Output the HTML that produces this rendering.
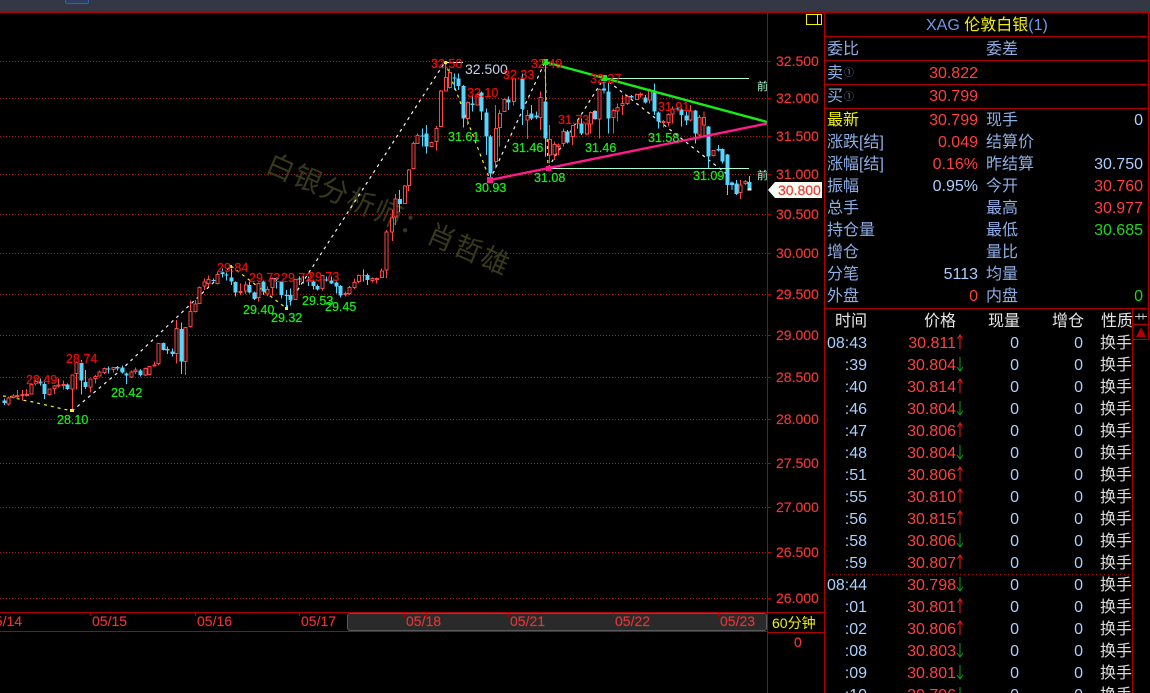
<!DOCTYPE html>
<html><head><meta charset="utf-8">
<style>
html,body{margin:0;padding:0;background:#000;width:1150px;height:693px;overflow:hidden}
svg{display:block}
text{font-family:"Liberation Sans","WenQuanYi Zen Hei","Noto Sans CJK SC",sans-serif;font-size:16px}
.ax{font-size:14px;fill:#f03636;stroke:#f03636;stroke-width:.15px}
.d{font-size:14px;fill:#e63434;stroke:#e63434;stroke-width:.15px}
.r{font-size:12.5px;fill:#ee0a0a;stroke:#ee0a0a;stroke-width:.25px}
.g{font-size:12.5px;fill:#14ee14;stroke:#14ee14;stroke-width:.25px}
.l{fill:#8eaee6}
.v{fill:#ff4040;text-anchor:end}
.b{fill:#a9d0ff;text-anchor:end}
.gv{fill:#22d422;text-anchor:end}
.h{fill:#e6e6e6}
.w{fill:#dcdcdc}
.c path{shape-rendering:crispEdges}
</style></head><body>
<svg width="1150" height="693" viewBox="0 0 1150 693" xmlns="http://www.w3.org/2000/svg">
<defs>
<g id="u"><path d="M960 -7V7M957.500 -3L960 -7L962.500 -3" fill="none" stroke="#e82020"/></g>
<g id="n"><path d="M960 -7V7M957 3L960 7L963 3" fill="none" stroke="#129c12"/></g>
</defs>
<rect width="1150" height="693" fill="#000"/>
<rect width="1150" height="11" fill="#343844"/>
<path d="M65.500 0V2.500Q65.500 3.500 67 3.500H87Q88.500 3.500 88.500 2.500V0" fill="#2d3f60" stroke="#2f62a8"/>
<rect y="11" width="1150" height="2" fill="#b00000"/>

<!-- grid -->
<g stroke="#a81818" stroke-dasharray="1 2" shape-rendering="crispEdges">
<path d="M0 61.500H767M0 98.500H767M0 136.500H767M0 174.500H767M0 214.500H767M0 253.500H767M0 294.500H767M0 335.500H767M0 377.500H767M0 419.500H767M0 463.500H767M0 507.500H767M0 552.500H767M0 598.500H767"/>
</g>
<g stroke="#b00000" shape-rendering="crispEdges">
<path d="M767 61.500h4M767 98.500h4M767 136.500h4M767 174.500h4M767 214.500h4M767 253.500h4M767 294.500h4M767 335.500h4M767 377.500h4M767 419.500h4M767 463.500h4M767 507.500h4M767 552.500h4M767 598.500h4"/>
</g>

<!-- watermark -->
<text transform="translate(264,171) rotate(23.500)" style="font-size:28px;letter-spacing:1.200px" fill="#38381a">白银分析师：肖哲雄</text>

<!-- dashed zigzag -->
<g fill="none" stroke-width="1.200" stroke-dasharray="3 4">
<path d="M3 396L13 397L22 400L33 402L50 406L72 411M231 266L286 308M445 62L490 180M545 62L548 168" stroke="#f2f21e"/>
<path d="M72 411L122 369L231 266M286 308L445 62M490 180L545 62M548 168L604 78L728 175" stroke="#f4f4f4"/>
</g>
<path d="M445 62.500H463" stroke="#f4f4f4"/>

<!-- candles, left half -->
<g class="c" transform="translate(0,240) scale(.33333)">
<path fill="none" stroke="#55d6ff" stroke-width="3" d="M13 476V495M121 415V436M133 420V477M202 430V450M244 360V464M256 390V447M325 380V400M352 378V392M367 376V400M379 398V432M421 387V410M490 307V332M502 320V342M517 325V350M544 247V402M640 115V125M667 85V112M679 98V122M694 85V135M706 125V170M748 125V160M763 155V180M790 122V165M829 112V145M844 125V175M859 150V205M871 145V197M898 110V135M911 108V130M925 110V138M940 118V148M952 133V152M980 110V125M994 110V132M1009 125V160M1021 135V172M1090 88V125M1103 100V135"/>
<path fill="none" stroke="#55d6ff" stroke-width="12" d="M13 481V489M121 425V431M133 432V462M202 433V447M244 369V422M256 426V441M325 386V389M352 381V386M367 383V398M379 400V406M421 391V405M490 309V330M502 327V331M517 334V342M544 267V365M640 120V123M667 97V102M679 104V107M694 112V125M706 126V157M748 135V158M763 158V177M790 125V155M829 114V118M844 125V165M859 165V168M871 165V180M898 115V118M925 122V125M940 125V138M952 138V148M980 118V122M994 122V130M1009 128V140M1021 138V167M1090 106V108M1103 105V120"/>
<path fill="none" stroke="#ff4444" stroke-width="3" d="M25 470V497M40 462V475M52 450V478M67 450V482M80 447V470M94 430V464M107 420V436M148 445V466M163 435V462M175 415V442M190 422V448M217 403V513M229 365V448M271 415V457M286 405V430M298 392V410M313 382V402M340 381V397M394 392V414M406 382V402M436 383V408M448 378V405M463 365V380M475 310V375M529 240V370M556 262V405M571 182V262M586 180V218M598 140V192M613 115V150M625 107V140M652 95V133M721 130V165M737 125V162M775 128V185M802 140V168M817 113V167M886 118V180M967 105V152M1036 155V170M1048 138V165M1063 115V147M1076 103V130M1117 112V128M1130 112V130M1145 85V113"/>
<path fill="#000" stroke="#ff4444" stroke-width="3" d="M21 474h9V492h-9zM36 468h9V472h-9zM48 466h9V470h-9zM63 464h9V467h-9zM76 463h9V466h-9zM90 433h9V462h-9zM103 425h9V431h-9zM144 447h9V463h-9zM159 438h9V446h-9zM171 435h9V438h-9zM186 433h9V437h-9zM213 405h9V447h-9zM225 367h9V401h-9zM267 417h9V441h-9zM282 410h9V416h-9zM294 396h9V408h-9zM309 386h9V397h-9zM336 383h9V388h-9zM390 396h9V411h-9zM402 390h9V395h-9zM432 385h9V405h-9zM444 380h9V403h-9zM459 375h9V378h-9zM471 310h9V371h-9zM525 265h9V340h-9zM552 262h9V365h-9zM567 215h9V260h-9zM582 192h9V215h-9zM594 142h9V190h-9zM609 126h9V138h-9zM621 118h9V130h-9zM648 103h9V130h-9zM717 155h9V158h-9zM733 135h9V153h-9zM771 130h9V172h-9zM798 148h9V162h-9zM813 115h9V143h-9zM882 118h9V178h-9zM963 107h9V145h-9zM1032 160h9V163h-9zM1044 142h9V160h-9zM1059 127h9V143h-9zM1072 106h9V125h-9zM1113 115h9V122h-9zM1126 116h9V118h-9zM1141 93h9V112h-9z"/>
</g>
<!-- candles, bridge -->
<g class="c">
<path fill="none" stroke="#ff4444" d="M386.500 230V278M392.500 210V241M395.500 194V225M408.500 169V191"/>
<path fill="#000" stroke="#ff4444" d="M385 232h3V270h-3zM390.500 218h3V232h-3zM394 199h3V217h-3z"/>
<path fill="none" stroke="#55d6ff" d="M399.500 190V212"/><path fill="#55d6ff" d="M398 199h4v5h-4z"/>
</g>
<!-- candles, right half -->
<g class="c" transform="translate(400,40) scale(.33333)">
<path fill="none" stroke="#55d6ff" stroke-width="3" d="M67 265V320M79 255V340M163 100V150M176 100V150M191 135V262M218 165V215M245 155V240M260 205V345M271 285V420M326 170V210M367 100V255M395 195V240M410 215V237M436 65V350M503 270V310M532 240V265M545 235V285M585 210V240M612 125V160M625 125V280M695 165V175M737 165V190M763 130V225M775 215V265M832 200V210M844 205V260M859 215V255M886 210V310M925 258V385M955 315V335M967 325V370M983 342V465M996 425V450M1009 420V465M1048 408V450"/>
<path fill="none" stroke="#55d6ff" stroke-width="12" d="M67 287V290M79 280V320M163 113V116M176 115V138M191 138V235M218 190V195M245 157V215M260 217V290M271 290V400M326 178V187M367 115V207M395 220V235M410 227V233M436 185V295M503 275V308M532 250V252M545 250V280M585 213V237M612 145V152M625 155V235M695 168V172M737 172V187M763 157V215M775 217V245M832 205V208M844 208V225M859 227V242M886 212V280M925 260V350M955 327V332M967 327V365M983 343V435M996 428V435M1009 430V462M1048 426V445"/>
<path stroke="#f4f4f4" stroke-width="12" d="M1048 445V452"/>
<path fill="none" stroke="#ff4444" stroke-width="3" d="M14 435V492M26 388V450M40 305V385M52 280V312M94 305V320M109 258V332M122 150V260M137 65V155M149 85V145M203 185V255M232 160V197M287 195V385M299 210V320M313 175V215M341 115V197M382 210V297M421 155V270M449 255V370M463 305V360M475 310V345M490 265V320M518 255V315M560 250V285M572 215V280M598 145V295M640 205V280M652 190V245M667 165V225M682 165V195M710 160V180M722 158V172M749 145V190M790 240V262M805 220V260M817 200V250M871 195V245M898 225V295M912 215V290M940 330V350M1021 420V477M1036 420V435"/>
<path fill="#000" stroke="#ff4444" stroke-width="3" d="M10 438h9V490h-9zM22 390h9V437h-9zM36 310h9V385h-9zM48 287h9V310h-9zM90 307h9V320h-9zM105 265h9V305h-9zM118 153h9V260h-9zM133 113h9V153h-9zM145 97h9V142h-9zM199 187h9V235h-9zM228 163h9V195h-9zM283 265h9V365h-9zM295 220h9V262h-9zM309 178h9V215h-9zM337 115h9V185h-9zM378 227h9V240h-9zM417 173h9V233h-9zM445 298h9V345h-9zM459 313h9V343h-9zM471 315h9V320h-9zM486 275h9V310h-9zM514 257h9V290h-9zM556 252h9V282h-9zM568 217h9V252h-9zM594 148h9V237h-9zM636 212h9V233h-9zM648 203h9V213h-9zM663 190h9V197h-9zM678 170h9V190h-9zM706 163h9V178h-9zM718 162h9V165h-9zM745 150h9V180h-9zM786 245h9V248h-9zM801 223h9V247h-9zM813 207h9V222h-9zM867 213h9V240h-9zM894 232h9V285h-9zM908 232h9V255h-9zM936 332h9V346h-9zM1017 435h9V458h-9zM1032 425h9V430h-9z"/>
</g>

<!-- trend lines -->
<path d="M604 78.500H749M548 168.500H749" stroke="#a8ffd2" stroke-width="1"/>
<path d="M545 62L767 122" stroke="#18ec18" stroke-width="2.400"/>
<path d="M490 180L767 123.500" stroke="#ff1a8c" stroke-width="2.400"/>
<rect x="542" y="59" width="6" height="6" fill="#18ec18"/><rect x="601" y="75" width="6" height="6" fill="#18ec18"/>
<rect x="487" y="177" width="6" height="6" fill="#ff1a8c"/><rect x="546" y="166" width="5" height="5" fill="#ff1a8c"/>
<g fill="#f2f21e"><rect x="70" y="409" width="4" height="3"/><rect x="229" y="265" width="3" height="3"/><rect x="285" y="307" width="3" height="3"/><rect x="444" y="61" width="3" height="3"/></g>
<text x="757" y="90" style="font-size:11px" fill="#a8ffd2">前</text>
<text x="757" y="179" style="font-size:11px" fill="#a8ffd2">前</text>

<!-- peak labels -->
<text class="r" x="26" y="384">28.49</text><text class="r" x="66" y="363">28.74</text>
<text class="g" x="57" y="424">28.10</text><text class="g" x="111" y="397">28.42</text>
<text class="r" x="217" y="272">29.84</text><text class="r" x="249" y="282">29.72</text><text class="r" x="281" y="282">29.72</text><text class="r" x="308" y="281">29.73</text>
<text class="g" x="243" y="314">29.40</text><text class="g" x="271" y="322">29.32</text><text class="g" x="302" y="305">29.53</text><text class="g" x="325" y="311">29.45</text>
<text class="r" x="431" y="68">32.50</text><text x="465" y="74" style="font-size:14px" fill="#c6d4f0">32.500</text>
<text class="r" x="467" y="97">32.10</text><text class="r" x="503" y="79">32.33</text><text class="r" x="531" y="68">32.49</text><text class="r" x="590" y="83">32.27</text><text class="r" x="558" y="124">31.73</text><text class="r" x="658" y="111">31.91</text>
<text class="g" x="448" y="141">31.61</text><text class="g" x="512" y="152">31.46</text><text class="g" x="585" y="152">31.46</text><text class="g" x="648" y="142">31.58</text><text class="g" x="693" y="180">31.09</text><text class="g" x="534" y="182">31.08</text><text class="g" x="475" y="192">30.93</text>

<!-- axis -->
<g fill="#b00000" shape-rendering="crispEdges">
<rect x="767" y="12" width="1" height="681"/>
<rect x="824" y="12" width="1" height="681"/>
<rect x="1148" y="12" width="1" height="296"/>
</g>
<rect x="806.500" y="14.500" width="15" height="10" fill="none" stroke="#f0f000"/><path d="M817.500 14.500V24.500" stroke="#f0f000"/>
<text class="ax" x="776" y="66">32.500</text><text class="ax" x="776" y="103">32.000</text><text class="ax" x="776" y="141">31.500</text><text class="ax" x="776" y="179">31.000</text><text class="ax" x="776" y="219">30.500</text><text class="ax" x="776" y="258">30.000</text><text class="ax" x="776" y="299">29.500</text><text class="ax" x="776" y="340">29.000</text><text class="ax" x="776" y="382">28.500</text><text class="ax" x="776" y="424">28.000</text><text class="ax" x="776" y="468">27.500</text><text class="ax" x="776" y="512">27.000</text><text class="ax" x="776" y="557">26.500</text><text class="ax" x="776" y="603">26.000</text>
<path d="M768 190L775 182H822V198H775Z" fill="#f8fff2"/>
<text class="ax" x="778" y="195">30.800</text>

<!-- timeline -->
<g fill="#b00000" shape-rendering="crispEdges">
<rect x="0" y="612" width="824" height="1"/><rect x="0" y="631" width="767" height="1"/><rect x="767" y="632" width="57" height="1"/>
<rect x="90" y="612" width="1" height="4"/><rect x="195" y="612" width="1" height="4"/><rect x="299" y="612" width="1" height="4"/>
</g>
<rect x="347.500" y="613.500" width="419" height="17" rx="2.500" fill="#2a2a2a" stroke="#5a5a5a"/>
<g fill="#b00000" shape-rendering="crispEdges"><rect x="404" y="613" width="1" height="4"/><rect x="426" y="613" width="1" height="4"/><rect x="508" y="613" width="1" height="4"/><rect x="613" y="613" width="1" height="4"/><rect x="718" y="613" width="1" height="4"/></g>
<text class="d" x="-13" y="626">05/14</text><text class="d" x="92" y="626">05/15</text><text class="d" x="197" y="626">05/16</text><text class="d" x="301" y="626">05/17</text><text class="d" x="406" y="626">05/18</text><text class="d" x="510" y="626">05/21</text><text class="d" x="615" y="626">05/22</text><text class="d" x="720" y="626">05/23</text>
<text x="772" y="628" style="font-size:14px" fill="#f2f200">60分钟</text>
<text class="ax" x="794" y="647">0</text>

<!-- right panel -->
<g fill="#b00000" shape-rendering="crispEdges">
<rect x="824" y="36" width="325" height="1"/><rect x="824" y="60" width="325" height="1"/><rect x="824" y="84" width="325" height="1"/><rect x="824" y="108" width="325" height="1"/><rect x="824" y="308" width="325" height="1"/>
<rect x="1132" y="309" width="1" height="384"/><rect x="1133" y="324" width="16" height="1"/><rect x="1133" y="339" width="16" height="1"/><rect x="1148" y="309" width="1" height="31"/>
</g>
<path d="M1135 316.500H1147M1139 313.500V319.500M1143 313.500V319.500" stroke="#c8c8c8"/>
<path d="M1141 327.500L1146 337H1136Z" fill="#b00000"/>
<text x="926" y="30"><tspan fill="#6f9be2">XAG </tspan><tspan fill="#f2f200">伦敦白银</tspan><tspan fill="#6f9be2">(1)</tspan></text>

<text class="l" x="827" y="54">委比</text><text class="l" x="986" y="54">委差</text>
<text class="l" x="827" y="78">卖</text><text x="844" y="76" style="font-size:10px" fill="#5f86b8">①</text><text class="v" x="978" y="78">30.822</text>
<text class="l" x="827" y="101">买</text><text x="844" y="100" style="font-size:10px" fill="#5f86b8">①</text><text class="v" x="978" y="101">30.799</text>
<text x="827" y="125" fill="#f2f200">最新</text><text class="v" x="978" y="125">30.799</text><text class="l" x="986" y="125">现手</text><text class="b" x="1143" y="125">0</text>
<text class="l" x="827" y="147">涨跌[结]</text><text class="v" x="978" y="147">0.049</text><text class="l" x="986" y="147">结算价</text>
<text class="l" x="827" y="169">涨幅[结]</text><text class="v" x="978" y="169">0.16%</text><text class="l" x="986" y="169">昨结算</text><text class="b" x="1143" y="169">30.750</text>
<text class="l" x="827" y="191">振幅</text><text class="b" x="978" y="191">0.95%</text><text class="l" x="986" y="191">今开</text><text class="v" x="1143" y="191">30.760</text>
<text class="l" x="827" y="213">总手</text><text class="l" x="986" y="213">最高</text><text class="v" x="1143" y="213">30.977</text>
<text class="l" x="827" y="235">持仓量</text><text class="l" x="986" y="235">最低</text><text class="gv" x="1143" y="235">30.685</text>
<text class="l" x="827" y="257">增仓</text><text class="l" x="986" y="257">量比</text>
<text class="l" x="827" y="279">分笔</text><text class="b" x="978" y="279">5113</text><text class="l" x="986" y="279">均量</text>
<text class="l" x="827" y="301">外盘</text><text class="v" x="978" y="301">0</text><text class="l" x="986" y="301">内盘</text><text class="gv" x="1143" y="301">0</text>

<text class="h" x="835" y="326">时间</text><text class="h" x="924" y="326">价格</text><text class="h" x="988" y="326">现量</text><text class="h" x="1052" y="326">增仓</text><text class="h" x="1101" y="326">性质</text>
<path d="M828 574.500H1131" stroke="#a81010" stroke-dasharray="1 3"/>

<text class="b" x="867" y="348">08:43</text><text class="v" x="956" y="348">30.811</text><use href="#u" y="342"/><text class="b" x="1019" y="348">0</text><text class="b" x="1083" y="348">0</text><text class="w" x="1100" y="348">换手</text>
<text class="b" x="867" y="370">:39</text><text class="v" x="956" y="370">30.804</text><use href="#n" y="364"/><text class="b" x="1019" y="370">0</text><text class="b" x="1083" y="370">0</text><text class="w" x="1100" y="370">换手</text>
<text class="b" x="867" y="392">:40</text><text class="v" x="956" y="392">30.814</text><use href="#u" y="386"/><text class="b" x="1019" y="392">0</text><text class="b" x="1083" y="392">0</text><text class="w" x="1100" y="392">换手</text>
<text class="b" x="867" y="414">:46</text><text class="v" x="956" y="414">30.804</text><use href="#n" y="408"/><text class="b" x="1019" y="414">0</text><text class="b" x="1083" y="414">0</text><text class="w" x="1100" y="414">换手</text>
<text class="b" x="867" y="436">:47</text><text class="v" x="956" y="436">30.806</text><use href="#u" y="430"/><text class="b" x="1019" y="436">0</text><text class="b" x="1083" y="436">0</text><text class="w" x="1100" y="436">换手</text>
<text class="b" x="867" y="458">:48</text><text class="v" x="956" y="458">30.804</text><use href="#n" y="452"/><text class="b" x="1019" y="458">0</text><text class="b" x="1083" y="458">0</text><text class="w" x="1100" y="458">换手</text>
<text class="b" x="867" y="480">:51</text><text class="v" x="956" y="480">30.806</text><use href="#u" y="474"/><text class="b" x="1019" y="480">0</text><text class="b" x="1083" y="480">0</text><text class="w" x="1100" y="480">换手</text>
<text class="b" x="867" y="502">:55</text><text class="v" x="956" y="502">30.810</text><use href="#u" y="496"/><text class="b" x="1019" y="502">0</text><text class="b" x="1083" y="502">0</text><text class="w" x="1100" y="502">换手</text>
<text class="b" x="867" y="524">:56</text><text class="v" x="956" y="524">30.815</text><use href="#u" y="518"/><text class="b" x="1019" y="524">0</text><text class="b" x="1083" y="524">0</text><text class="w" x="1100" y="524">换手</text>
<text class="b" x="867" y="546">:58</text><text class="v" x="956" y="546">30.806</text><use href="#n" y="540"/><text class="b" x="1019" y="546">0</text><text class="b" x="1083" y="546">0</text><text class="w" x="1100" y="546">换手</text>
<text class="b" x="867" y="568">:59</text><text class="v" x="956" y="568">30.807</text><use href="#u" y="562"/><text class="b" x="1019" y="568">0</text><text class="b" x="1083" y="568">0</text><text class="w" x="1100" y="568">换手</text>
<text class="b" x="867" y="590">08:44</text><text class="v" x="956" y="590">30.798</text><use href="#n" y="584"/><text class="b" x="1019" y="590">0</text><text class="b" x="1083" y="590">0</text><text class="w" x="1100" y="590">换手</text>
<text class="b" x="867" y="612">:01</text><text class="v" x="956" y="612">30.801</text><use href="#u" y="606"/><text class="b" x="1019" y="612">0</text><text class="b" x="1083" y="612">0</text><text class="w" x="1100" y="612">换手</text>
<text class="b" x="867" y="634">:02</text><text class="v" x="956" y="634">30.806</text><use href="#u" y="628"/><text class="b" x="1019" y="634">0</text><text class="b" x="1083" y="634">0</text><text class="w" x="1100" y="634">换手</text>
<text class="b" x="867" y="656">:08</text><text class="v" x="956" y="656">30.803</text><use href="#n" y="650"/><text class="b" x="1019" y="656">0</text><text class="b" x="1083" y="656">0</text><text class="w" x="1100" y="656">换手</text>
<text class="b" x="867" y="678">:09</text><text class="v" x="956" y="678">30.801</text><use href="#n" y="672"/><text class="b" x="1019" y="678">0</text><text class="b" x="1083" y="678">0</text><text class="w" x="1100" y="678">换手</text>
<text class="b" x="867" y="700">:10</text><text class="v" x="956" y="700">30.796</text><use href="#n" y="694"/><text class="b" x="1019" y="700">0</text><text class="b" x="1083" y="700">0</text><text class="w" x="1100" y="700">换手</text>
</svg>
</body></html>
